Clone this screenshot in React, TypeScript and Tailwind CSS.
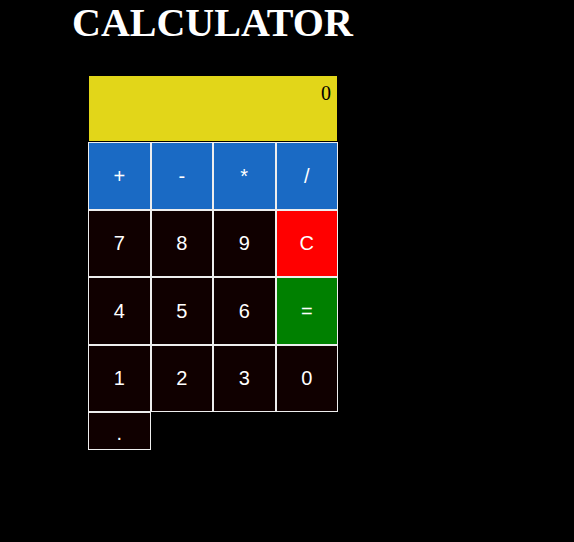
import React from "react";

type Key = { label: string; cls: string };

const keys: Key[] = [
  { label: "+", cls: "bg-[#1a6ac4]" },
  { label: "-", cls: "bg-[#1a6ac4]" },
  { label: "*", cls: "bg-[#1a6ac4]" },
  { label: "/", cls: "bg-[#1a6ac4]" },
  { label: "7", cls: "bg-[#100000]" },
  { label: "8", cls: "bg-[#100000]" },
  { label: "9", cls: "bg-[#100000]" },
  { label: "C", cls: "bg-[#ff0000]" },
  { label: "4", cls: "bg-[#100000]" },
  { label: "5", cls: "bg-[#100000]" },
  { label: "6", cls: "bg-[#100000]" },
  { label: "=", cls: "bg-[#008000]" },
  { label: "1", cls: "bg-[#100000]" },
  { label: "2", cls: "bg-[#100000]" },
  { label: "3", cls: "bg-[#100000]" },
  { label: "0", cls: "bg-[#100000]" },
];

export default function App() {
  return (
    <div className="min-h-screen bg-black">
      <h1 className="pl-[72px] pt-[1px] text-[40px] leading-[44px] font-bold text-white font-['Liberation_Serif',serif]">
        CALCULATOR
      </h1>
      <div className="ml-[88px] mt-[30px] w-[250px]">
        <div className="h-[67px] w-[250px] border border-black bg-[#e2d619] pt-[6px] pr-[6px] text-right text-[20px] leading-[22px] text-black font-['Liberation_Serif',serif]">
          0
        </div>
        <div className="flex flex-wrap">
          {keys.map((k) => (
            <button
              key={k.label}
              className={`${k.cls} box-border flex h-[67.5px] w-[62.5px] items-center justify-center border border-[#eeeeee] text-[20px] text-white font-['Liberation_Sans',sans-serif]`}
            >
              {k.label}
            </button>
          ))}
          <button className="box-border flex h-[38px] w-[62.5px] items-center justify-center border border-[#eeeeee] bg-[#100000] pt-[4px] text-[20px] text-white font-['Liberation_Sans',sans-serif]">
            .
          </button>
        </div>
      </div>
    </div>
  );
}
